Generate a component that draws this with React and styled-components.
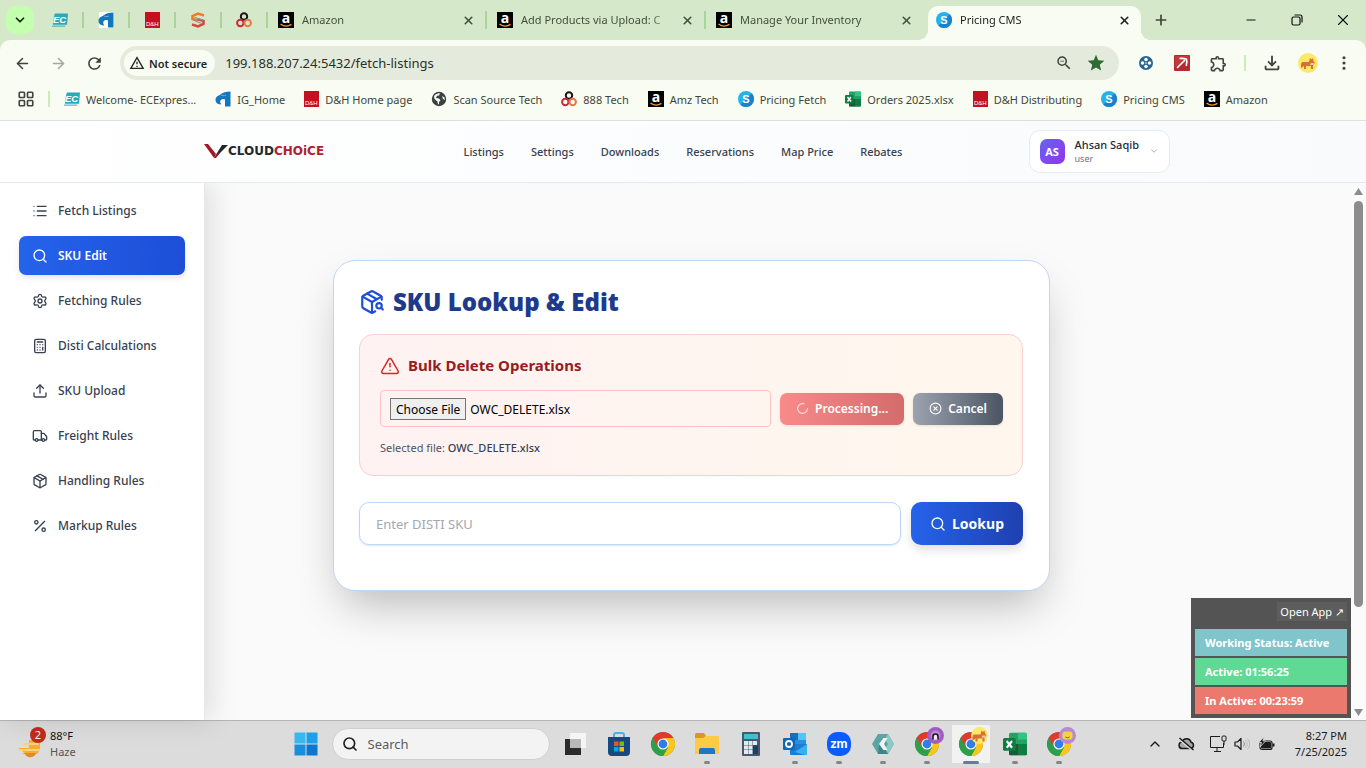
import React, { useEffect, useRef } from "react";
import styled, { createGlobalStyle, css } from "styled-components";
import {
  ArrowLeft,
  ArrowRight,
  Calculator,
  ChevronDown,
  ChevronUp,
  CircleX,
  EllipsisVertical,
  LayoutGrid,
  List,
  LoaderCircle,
  Minus,
  Package,
  PackageSearch,
  Percent,
  Plus,
  Search,
  Settings,
  TriangleAlert,
  Truck,
  Upload,
  X,
} from "lucide-react";
import {
  MdOutlineExtension,
  MdOutlineFileDownload,
  MdRefresh,
  MdStar,
  MdZoomOut,
  MdOutlineWarningAmber,
} from "react-icons/md";

const GlobalStyle = createGlobalStyle`
  * {
    box-sizing: border-box;
  }
  body {
    margin: 0;
    font-family: "Noto Sans", "Open Sans", sans-serif;
    font-size: 12px;
    color: #374151;
  }
  button,
  input {
    font-family: inherit;
  }
  button {
    padding: 0;
    border: none;
    background: none;
    color: inherit;
    cursor: pointer;
  }
  a {
    color: inherit;
    text-decoration: none;
  }
  svg {
    display: block;
    flex-shrink: 0;
    overflow: visible;
  }
`;

const Screen = styled.div`
  display: flex;
  flex-direction: column;
  height: 100vh;
  overflow: hidden;
`;

/* browser */

const TabStrip = styled.div`
  display: flex;
  align-items: center;
  height: 40px;
  padding-left: 6px;
  background-color: #d6e8ca;
`;

const TabSearch = styled.button`
  display: flex;
  align-items: center;
  justify-content: center;
  flex-shrink: 0;
  width: 28px;
  height: 28px;
  margin-right: 4px;
  border-radius: 10px;
  background-color: #c4ffb0;
  color: #16240f;
`;

const separator = css`
  border-right: 2px solid #a9d596;
`;

const PinnedTab = styled.button`
  display: flex;
  align-items: center;
  justify-content: center;
  flex-shrink: 0;
  width: 46px;
  height: 16px;
  ${separator}
`;

const Tab = styled.div`
  display: flex;
  align-items: center;
  flex: 0 0 219px;
  min-width: 0;
  height: 18px;
  padding: 0 10px;
  gap: 8px;
  font-size: 11px;
  color: #43503c;
  ${separator}
  ${(props) => !props.$line && "border-color: transparent;"}
  .name {
    flex: 1;
    overflow: hidden;
    white-space: nowrap;
    line-height: 18px;
    mask-image: linear-gradient(to right, #000 85%, transparent);
  }
`;

const ActiveTab = styled(Tab)`
  position: relative;
  align-self: flex-end;
  flex-basis: 213px;
  height: 34px;
  margin: 0 9px 0 3px;
  padding: 0 10px 6px 8px;
  border: none;
  border-radius: 10px 10px 0 0;
  background-color: #f9fcf2;
  color: #1b1f18;
  &::before,
  &::after {
    content: "";
    position: absolute;
    bottom: 0;
    width: 10px;
    height: 10px;
  }
  &::before {
    left: -10px;
    background: radial-gradient(circle at 0 0, transparent 10px, #f9fcf2 10px);
  }
  &::after {
    right: -10px;
    background: radial-gradient(circle at 100% 0, transparent 10px, #f9fcf2 10px);
  }
`;

const NewTab = styled.button`
  display: flex;
  flex-shrink: 0;
  padding: 3px;
  color: #3c4737;
`;

const WindowButtons = styled.div`
  display: flex;
  flex-shrink: 0;
  margin-left: auto;
  button {
    display: flex;
    align-items: center;
    justify-content: center;
    width: 46px;
    height: 40px;
    color: #111;
  }
`;

const Toolbar = styled.div`
  display: flex;
  align-items: center;
  height: 46px;
  padding: 0 4px;
  background-color: #f9fcf2;
  border-radius: 10px 10px 0 0;
`;

const ToolbarWrap = styled.div`
  background-color: #d6e8ca;
`;

const ToolButton = styled.button`
  display: flex;
  align-items: center;
  justify-content: center;
  flex-shrink: 0;
  width: 36px;
  height: 34px;
  color: ${(props) => (props.$dim ? "#a4a9a0" : "#3d443a")};
`;

const ToolLine = styled.span`
  width: 10px;
  height: 16px;
  margin-right: 8px;
  ${separator}
  border-color: #c7eeb6;
`;

const AddressBar = styled.form`
  display: flex;
  align-items: center;
  flex: 1;
  height: 34px;
  margin: 0 9px 0 8px;
  padding: 0 7px 0 4px;
  border-radius: 17px;
  background-color: #e4ebdc;
  input {
    flex: 1;
    min-width: 0;
    padding: 0 10px;
    border: none;
    outline: none;
    background: none;
    font-size: 13px;
    color: #2b3028;
  }
`;

const NotSecure = styled.button`
  display: flex;
  align-items: center;
  gap: 4px;
  height: 26px;
  padding: 0 8px 0 5px;
  border-radius: 13px;
  background-color: #f9fcf2;
  font-size: 11px;
  font-weight: 600;
  color: #22271f;
`;

const BarIcon = styled.button`
  display: flex;
  width: 32px;
  justify-content: center;
  color: ${(props) => props.$color || "#3d443a"};
`;

const Bookmarks = styled.nav`
  display: flex;
  align-items: center;
  height: 35px;
  padding: 0 17px 8px;
  gap: 19px;
  overflow: hidden;
  border-bottom: 1px solid #dfe0dc;
  background-color: #f9fcf2;
  font-size: 11px;
  color: #3f473b;
  a {
    display: flex;
    align-items: center;
    gap: 6px;
    white-space: nowrap;
  }
`;

const BookmarkLine = styled.span`
  width: 2px;
  height: 16px;
  margin: 0 -5px 0 -6px;
  background-color: #c7eeb6;
`;

/* page */

const Header = styled.header`
  position: relative;
  z-index: 1;
  display: flex;
  justify-content: center;
  height: 62px;
  padding-bottom: 1px;
  border-bottom: 1px solid #e6e9ed;
  background-image: linear-gradient(to right, #ffffff, #f8fafc);
`;

const HeaderInner = styled.div`
  display: grid;
  grid-template-columns: 1fr auto 1fr;
  align-items: center;
  width: 100%;
  max-width: 974px;
`;

const Logo = styled.a`
  display: flex;
  align-items: center;
  padding-left: 8px;
  font-family: "DejaVu Sans", sans-serif;
  font-size: 12px;
  font-weight: 700;
  line-height: 16px;
  color: #24292f;
  span {
    color: #b3202e;
  }
`;

const TopNav = styled.nav`
  display: flex;
  gap: 27px;
  font-size: 11px;
  font-weight: 500;
  color: #374151;
`;

const UserButton = styled.button`
  display: flex;
  align-items: center;
  justify-self: end;
  height: 43px;
  padding: 0 10px;
  gap: 10px;
  border: 1px solid #e8ebf0;
  border-radius: 11px;
  background-color: #fff;
  text-align: left;
  .avatar {
    width: 25px;
    height: 25px;
    border-radius: 7px;
    background-image: linear-gradient(135deg, #6366f1, #9333ea);
    font-size: 11px;
    font-weight: 700;
    line-height: 25px;
    text-align: center;
    color: #fff;
  }
  .name {
    font-size: 11px;
    font-weight: 500;
    line-height: 15px;
    color: #1f2937;
  }
  .role {
    font-size: 9px;
    line-height: 13px;
    color: #6b7280;
  }
`;

const Body = styled.div`
  position: relative;
  display: flex;
  flex: 1;
  min-height: 0;
  background-color: #fafafa;
`;

const Sidebar = styled.nav`
  display: flex;
  flex-direction: column;
  flex-shrink: 0;
  gap: 6px;
  width: 205px;
  padding: 8px 19px 0;
  border-right: 1px solid #e5e7eb;
  background-color: #fff;
  box-shadow: 6px 0 28px rgba(0, 0, 0, 0.12);
`;

const SideLink = styled.a`
  display: flex;
  align-items: center;
  flex-shrink: 0;
  height: 39px;
  padding: 0 13px;
  gap: 10px;
  border-radius: 7px;
  font-size: 12px;
  font-weight: 500;
  color: #374151;
  ${(props) =>
    props.$active &&
    css`
      background-image: linear-gradient(to right, #2563eb, #1d4ed8);
      box-shadow: 0 3px 6px rgba(0, 0, 0, 0.1);
      font-weight: 600;
      color: #fff;
    `}
`;

const Main = styled.main`
  flex: 1;
  padding: 77px 128px 0;
`;

const Card = styled.section`
  max-width: 717px;
  padding: 25px 26px 45px 25px;
  border: 1px solid #bfd7f7;
  border-radius: 22px;
  background-color: #fff;
  box-shadow: 0 22px 45px -10px rgba(0, 0, 0, 0.27);
`;

const CardTitle = styled.h1`
  display: flex;
  align-items: center;
  gap: 8px;
  margin: 0 0 17px;
  font-size: 24px;
  font-weight: 900;
  line-height: 31px;
  color: #1e3a8a;
  svg {
    color: #1d4ed8;
  }
`;

const DeleteBox = styled.div`
  margin-bottom: 26px;
  padding: 20px 19px 18px 20px;
  border: 1px solid #f9cfcf;
  border-radius: 14px;
  background-image: linear-gradient(to right, #fef2f2, #fff7ed);
`;

const BoxTitle = styled.h2`
  display: flex;
  align-items: center;
  gap: 8px;
  margin: 0 0 14px;
  font-size: 15px;
  font-weight: 700;
  line-height: 21px;
  color: #991b1b;
  svg {
    color: #dc2626;
  }
`;

const FileRow = styled.div`
  display: flex;
  align-items: center;
  gap: 9px;
`;

const FileInput = styled.input`
  flex: 1;
  min-width: 0;
  height: 37px;
  padding: 7px 9px;
  border: 1px solid #fbc4c4;
  border-radius: 4px;
  font-size: 12px;
  color: #000;
  &::file-selector-button {
    height: 22px;
    padding: 0 5px;
    border: 1px solid #767676;
    background-color: #efefef;
    font-family: inherit;
    font-size: 12px;
    color: #000;
  }
`;

const SmallButton = styled.button`
  display: flex;
  align-items: center;
  gap: 6px;
  height: 32px;
  padding: 0 16px;
  border-radius: 7px;
  background-image: linear-gradient(
    to right,
    ${(props) => (props.$gray ? "#9ca3af, #4b5563" : "#f98a8a, #d36c6c")}
  );
  box-shadow: 0 1px 3px rgba(0, 0, 0, 0.1);
  font-size: 12px;
  font-weight: 600;
  color: #fff;
`;

const Selected = styled.p`
  margin: 12px 0 0;
  font-size: 11px;
  line-height: 18px;
  color: #4b5563;
  b {
    font-weight: 500;
    color: #374151;
  }
`;

const LookupRow = styled.form`
  display: flex;
  gap: 10px;
`;

const SkuInput = styled.input`
  flex: 1;
  min-width: 0;
  height: 43px;
  padding: 0 16px;
  border: 1px solid #bfd7f7;
  border-radius: 10px;
  outline: none;
  box-shadow: 0 1px 2px rgba(59, 130, 246, 0.2);
  font-size: 13px;
  color: #374151;
  &::placeholder {
    color: #a3a8b0;
  }
`;

const LookupButton = styled.button`
  display: flex;
  align-items: center;
  justify-content: center;
  gap: 6px;
  height: 43px;
  padding: 0 19px;
  border-radius: 10px;
  background-image: linear-gradient(to right, #2563eb, #1e40af);
  box-shadow: 0 5px 10px rgba(0, 0, 0, 0.12);
  font-size: 14px;
  font-weight: 700;
  color: #fff;
`;

const Scrollbar = styled.div`
  display: flex;
  flex-direction: column;
  align-items: center;
  justify-content: space-between;
  width: 15px;
  padding: 5px 0 4px;
  background-color: #fbfbfb;
  .thumb {
    flex: 0 1 406px;
    width: 9px;
    margin: 6px 0 auto;
    border-radius: 5px;
    background-color: #8c8c8c;
  }
`;

const Tracker = styled.aside`
  position: absolute;
  right: 15px;
  bottom: 2px;
  display: flex;
  flex-direction: column;
  gap: 2px;
  width: 160px;
  padding: 4px;
  background-color: #545454;
  color: #fff;
  button {
    align-self: flex-end;
    height: 19px;
    margin-bottom: 6px;
    padding: 0 3px;
    background-color: #5d5d5d;
    font-size: 11px;
    color: #fff;
  }
`;

const TrackerRow = styled.div`
  height: 27px;
  padding-left: 10px;
  background-color: ${(props) => props.$color};
  font-size: 11px;
  font-weight: 700;
  line-height: 27px;
`;

/* taskbar */

const Taskbar = styled.footer`
  display: grid;
  grid-template-columns: 1fr auto 1fr;
  align-items: center;
  height: 48px;
  padding-bottom: 2px;
  border-top: 1px solid #b4b4b4;
  background-color: #dcdcdc;
  color: #222;
`;

const Weather = styled.button`
  display: flex;
  align-items: center;
  gap: 6px;
  padding-left: 18px;
  font-size: 11px;
  line-height: 16px;
  text-align: left;
  color: #111;
  .sky {
    color: #555;
  }
`;

const Apps = styled.div`
  display: flex;
  align-items: center;
  padding-right: 2px;
`;

const AppButton = styled.button`
  position: relative;
  display: flex;
  align-items: center;
  justify-content: center;
  width: 44px;
  height: 40px;
  ${(props) =>
    props.$running &&
    css`
      &::after {
        content: "";
        position: absolute;
        bottom: 0;
        width: 6px;
        height: 3px;
        border-radius: 2px;
        background-color: #858585;
      }
    `}
  ${(props) =>
    props.$active &&
    css`
      background: linear-gradient(#f2f2f2, #f2f2f2) center / 38px 38px no-repeat;
      &::after {
        width: 16px;
        background-color: #6b7a99;
      }
    `}
`;

const TaskSearch = styled.label`
  display: flex;
  align-items: center;
  gap: 10px;
  width: 218px;
  height: 32px;
  margin: 0 3px 0 4px;
  padding: 0 9px;
  border: 1px solid #cfcfcf;
  border-radius: 16px;
  background-color: #f3f3f3;
  input {
    width: 100%;
    padding: 0;
    border: none;
    outline: none;
    background: none;
    font-size: 13px;
    &::placeholder {
      color: #5c5c5c;
    }
  }
`;

const Tray = styled.div`
  display: flex;
  align-items: center;
  justify-content: flex-end;
  gap: 7px;
  padding-right: 19px;
  color: #1b1b1b;
  svg:first-child {
    margin-right: 8px;
  }
  svg:nth-child(2) {
    margin-right: 8px;
  }
`;

const Clock = styled.time`
  margin-left: 13px;
  font-size: 11px;
  line-height: 16px;
  text-align: right;
`;

/* drawings */

function EcIcon() {
  return (
    <svg width="16" height="16" viewBox="0 0 17 16">
      <path d="M3 1h14l-1 12H1l1-8z" fill="#2ba9b8" />
      <path d="M0 14.500h14" stroke="#2ba9b8" />
      <text x="1" y="11.500" fontSize="10" fontWeight="900" fontStyle="italic" fill="#fff" fontFamily="Liberation Sans, sans-serif">
        EC
      </text>
    </svg>
  );
}

function IgIcon() {
  return (
    <svg width="16" height="16" viewBox="0 0 16 16">
      <rect x="1" width="15" height="16" fill="#fff" />
      <path d="M15.500.5v15H10V8.500C7.500 7.500 5.500 8.500 5.200 10.500c0 1.200.4 2 1.300 2.800C3 13.800.5 12 .5 9 .5 5 4 4.800 5.500 3.500 7.500 1.500 11 .5 15.500.5z" fill="#1277bd" />
      <path d="M5 3C6.500 5 9 5 11 4" fill="none" stroke="#6fb2de" strokeWidth="1" />
    </svg>
  );
}

function DhIcon() {
  return (
    <svg width="15" height="16" viewBox="0 0 15 16">
      <rect width="15" height="16" fill="#c4101f" />
      <text x="1" y="14" fontSize="6" fill="#fff" fontFamily="Liberation Sans, sans-serif">
        D&amp;H
      </text>
    </svg>
  );
}

function SwirlIcon() {
  return (
    <svg width="16" height="16" viewBox="0 0 16 16" fill="none" strokeWidth="2.500">
      <path d="M14 3.500 8 1.500 2.500 4v3L8 8.500" stroke="#f07a2b" />
      <path d="M2 12.500 8 14.500l5.500-2.500V9L8 7.200" stroke="#d8453a" />
      <path d="M4.500 5.200 13 8.500M3 8l8 3.200" stroke="#8d9297" strokeWidth="1.200" />
    </svg>
  );
}

function RingsIcon() {
  return (
    <svg width="16" height="16" viewBox="0 0 16 16" fill="none" strokeWidth="2">
      <circle cx="8" cy="4.500" r="3.200" stroke="#1f1416" />
      <circle cx="4.300" cy="11" r="3.200" stroke="#c8283a" />
      <circle cx="11.700" cy="11" r="3.200" stroke="#e8784a" />
    </svg>
  );
}

function AmazonIcon() {
  return (
    <svg width="16" height="16" viewBox="0 0 16 16">
      <rect width="16" height="16" fill="#000" />
      <text x="8" y="11" fontSize="14" fontWeight="700" textAnchor="middle" fill="#fff" fontFamily="Open Sans, sans-serif">
        a
      </text>
      <path d="M2.500 12c3.500 2.600 7.500 2.600 11 .4" fill="none" stroke="#f19a2b" strokeWidth="1.300" />
    </svg>
  );
}

function PricingIcon() {
  return (
    <svg width="16" height="16" viewBox="0 0 16 16">
      <circle cx="8" cy="8" r="8" fill="#23b3ea" />
      <path d="M13.700 2.300a8 8 0 0 1-11.400 11.400z" fill="#1583cf" />
      <text x="8" y="12" fontSize="11" fontWeight="700" textAnchor="middle" fill="#fff" fontFamily="Liberation Sans, sans-serif">
        S
      </text>
    </svg>
  );
}

function ExcelIcon({ size = 16 }) {
  return (
    <svg width={size} height={size} viewBox="0 0 16 16">
      <rect x="4" y="0.500" width="12" height="15" rx="1" fill="#21a366" />
      <path d="M4 8h6v7.500H5a1 1 0 0 1-1-1z" fill="#185c37" />
      <path d="M10 8h6v6.500a1 1 0 0 1-1 1h-5z" fill="#107c41" />
      <path d="M10 .5h5a1 1 0 0 1 1 1V5h-6z" fill="#33c481" />
      <rect y="4" width="8.500" height="8.500" rx="1" fill="#107c41" />
      <path d="m2.500 6 3.500 4.500M6 6l-3.500 4.500" stroke="#fff" strokeWidth="1.400" />
    </svg>
  );
}

function GlobeIcon() {
  return (
    <svg width="16" height="16" viewBox="0 0 16 16">
      <circle cx="8" cy="8" r="7.200" fill="#3b4043" />
      <path d="M3 5c2-2 4-3 6-2.500L8 4.500l-2 .3L5 7l3 .4 1.500 1.800L8 11v2.500c-1 0-1.500-1.500-1.500-3L3.500 8zM11 5l2.500 1.500L13.800 9 12 8z" fill="#f9fcf2" />
    </svg>
  );
}

function ExtensionDot() {
  return (
    <svg width="14" height="14" viewBox="0 0 16 16">
      <circle cx="8" cy="8" r="8" fill="#2b648f" />
      <circle cx="8" cy="4" r="2" fill="#fff" />
      <circle cx="8" cy="12" r="2" fill="#fff" />
      <circle cx="4" cy="8" r="2" fill="#fff" />
      <circle cx="12" cy="8" r="2" fill="#fff" />
      <path d="m8 6.500 1.500 1.500L8 9.500 6.500 8z" fill="#9fc0d8" />
    </svg>
  );
}

function ExtensionPick() {
  return (
    <svg width="16" height="16" viewBox="0 0 16 16">
      <rect width="16" height="16" rx="1" fill="#b32b30" />
      <path d="M1 1h14v6L1 12z" fill="#cf4a4c" opacity=".5" />
      <path d="M3 13 11 5M5.500 3.500c3-.3 5.200 0 7 .8.6 2 .6 4-.2 6.700" fill="none" stroke="#fff" strokeWidth="1.600" />
    </svg>
  );
}

function DogFace({ r = 10 }) {
  return (
    <g>
      <circle r={r} fill="#fbe96a" />
      <path d="M-7 1l1-2h7l1-4 1.500 1.500L5-5l.5 3L7 0 5 2v4H3V3h-5v3h-2V3l-3 2z" fill="#d96f32" />
      <path d="M3 0l3 0-1 2H2z" fill="#f7d3b5" />
    </g>
  );
}

function ChromeLogo({ badge }) {
  return (
    <svg width="32" height="32" viewBox="0 0 32 32">
      <g transform="translate(16 16)">
        <circle r="12" fill="#34a853" />
        <path d="M-10.400-6A12 12 0 0 1 10.400-6L0-6-5.200 3z" fill="#e0392d" />
        <path d="M10.400-6A12 12 0 0 1 0 12L5.200 3 0-6z" fill="#fbc519" />
        <path d="M-10.400-6A12 12 0 0 0 0 12L5.200 3-5.200 3z" fill="#2e9e4b" />
        <circle r="5.600" fill="#fff" />
        <circle r="4.400" fill="#2f7de9" />
      </g>
      {badge === "headset" && (
        <g transform="translate(24.500 7.500)">
          <circle r="8.500" fill="#a05cc0" />
          <circle r="5" fill="#b98ad0" />
          <path d="M-2.500 4v-3a2.500 2.500 0 0 1 5 0v3" fill="#f6e9fb" stroke="#1d1424" strokeWidth="1.600" />
        </g>
      )}
      {badge === "dog" && (
        <g transform="translate(24.500 7.500)">
          <DogFace r={8.5} />
        </g>
      )}
      {badge === "cloud" && (
        <g transform="translate(24.500 7.500)">
          <circle r="8.500" fill="#b48ad6" />
          <path d="M-5 0a3 3 0 0 1 3-4h4a3 3 0 0 1 3 4 3 3 0 0 1-3 4h-4a3 3 0 0 1-3-4" fill="#f6d33c" />
          <path d="M-2 1.500Q0 3 2 1.500" fill="none" stroke="#8d5c10" />
        </g>
      )}
    </svg>
  );
}

function WindowsLogo() {
  return (
    <svg width="24" height="24" viewBox="0 0 24 24">
      <path d="M.5.500h11v11H.5z" fill="#38b8f0" />
      <path d="M12.500.500h11v11h-11z" fill="#1f9fe8" />
      <path d="M.5 12.500h11v11H.5z" fill="#178fdf" />
      <path d="M12.500 12.500h11v11h-11z" fill="#0b77d0" />
    </svg>
  );
}

function TaskViewIcon() {
  return (
    <svg width="24" height="24" viewBox="0 0 24 24">
      <rect x="7" y="1" width="16" height="15" fill="#f5f5f5" />
      <rect x="2" y="7" width="16" height="16" fill="#2b2b2b" />
      <rect x="7" y="7" width="11" height="9" fill="#b9b9b9" />
    </svg>
  );
}

function StoreIcon() {
  return (
    <svg width="24" height="24" viewBox="0 0 24 24">
      <path d="M7 5V3a2 2 0 0 1 2-2h6a2 2 0 0 1 2 2v2" fill="none" stroke="#43b5e6" strokeWidth="2" />
      <path d="M1 5h22v15a4 4 0 0 1-4 4H5a4 4 0 0 1-4-4z" fill="#17487f" />
      <path d="M7 9.500h4.500V14H7z" fill="#f05325" />
      <path d="M12.500 9.500H17V14h-4.500z" fill="#80bb0a" />
      <path d="M7 15h4.500v4.500H7z" fill="#05a5f0" />
      <path d="M12.500 15H17v4.500h-4.500z" fill="#fdb813" />
    </svg>
  );
}

function FolderIcon() {
  return (
    <svg width="26" height="24" viewBox="0 0 26 24">
      <path d="M1 2.500A1.500 1.500 0 0 1 2.500 1H10l2 3-3 3H1z" fill="#d89a1c" />
      <path d="M1 6h8l3-2h12a1 1 0 0 1 1 1v17H1z" fill="#fbcb45" />
      <path d="M5 22v-4a2 2 0 0 1 2-2h12a2 2 0 0 1 2 2v4z" fill="#1f77c4" />
    </svg>
  );
}

function CalcIcon() {
  const keys = [
    [4, 9],
    [8.5, 9],
    [13, 9],
    [4, 13.5],
    [8.5, 13.5],
    [4, 18],
    [8.5, 18],
  ];
  return (
    <svg width="20" height="24" viewBox="0 0 20 24">
      <rect x="1" width="18" height="24" rx="1" fill="#48596b" />
      <rect x="3" y="2" width="14" height="5" fill="#3fc0cf" />
      {keys.map(([x, y]) => (
        <rect key={`${x}-${y}`} x={x - 1} y={y} width="4" height="4" fill="#e4ebf0" />
      ))}
      <rect x="12" y="13.500" width="5" height="8.500" fill="#1d3f66" />
    </svg>
  );
}

function OutlookIcon() {
  return (
    <svg width="26" height="24" viewBox="0 0 26 24">
      <path d="M8 1h16v13H8z" fill="#2a8fdc" />
      <path d="M16 1h8v7h-8z" fill="#50c4f5" />
      <path d="M8 1h8v7H8z" fill="#1470c2" />
      <path d="M8 12h17v11H9a1 1 0 0 1-1-1z" fill="#1a7fd4" />
      <path d="m25 12-12 8 10 3h2z" fill="#38b1ef" />
      <rect x="1" y="6" width="12" height="12" rx="1" fill="#1267b8" />
      <circle cx="7" cy="12" r="3" fill="none" stroke="#fff" strokeWidth="1.800" />
    </svg>
  );
}

function ZoomIcon() {
  return (
    <svg width="24" height="24" viewBox="0 0 24 24">
      <rect width="24" height="24" rx="10" fill="#0b5cff" />
      <text x="12" y="16" fontSize="13" fontWeight="900" textAnchor="middle" fill="#fff" fontFamily="Lato, sans-serif">
        zm
      </text>
    </svg>
  );
}

function HexIcon() {
  return (
    <svg width="24" height="24" viewBox="0 0 24 24">
      <path d="M7 2h10l6 10-6 10H7L1 12z" fill="#5ea3a3" />
      <path d="M17 2l6 10-6 10-3-5 3-5-3-5z" fill="#8ac9c4" />
      <path d="M7 22h10l-3-5-6-5z" fill="#3f8587" />
      <path d="M8 12l4.500-6h4L13 12l3.500 6h-4z" fill="#eef7f6" />
    </svg>
  );
}

function HazeIcon() {
  return (
    <svg width="26" height="32" viewBox="0 0 26 32">
      <path d="M11 12h11v8a8 8 0 0 1-3 6H8l-4-3-4-3h11z" fill="#f5ad35" />
      <path d="M6 16h14M2 22h19" stroke="#f9d27c" strokeWidth="2" strokeLinecap="round" />
      <path d="M4 25h14a6 6 0 0 1-11 1z" fill="#e48a1c" />
      <circle cx="20" cy="7" r="8" fill="#c42b1c" />
      <text x="20" y="11" fontSize="11" textAnchor="middle" fill="#fff" fontFamily="Noto Sans, sans-serif">
        2
      </text>
    </svg>
  );
}

function CloudOffIcon() {
  return (
    <svg width="17" height="15" viewBox="0 0 17 15" fill="none" stroke="#1b1b1b" strokeWidth="1.500">
      <path d="M4.500 12.500a3.300 3.300 0 0 1-.3-6.600 4.600 4.600 0 0 1 8.800.3 3.200 3.200 0 0 1-.4 6.300z" fill="#a8a8a8" />
      <path d="M1.500 3.500 14 14" stroke="#dcdcdc" strokeWidth="2" />
      <path d="M1.500 2 15.500 14" />
    </svg>
  );
}

function MonitorIcon() {
  return (
    <svg width="17" height="17" viewBox="0 0 17 17" fill="none" stroke="#1b1b1b">
      <path d="M10 1.500H.5v11h13V8M4 16.500h7M7 12.500v4" />
      <rect x="12" y="1" width="4" height="5" rx="1" />
      <path d="M14 6v4" />
    </svg>
  );
}

function SpeakerIcon() {
  return (
    <svg width="17" height="14" viewBox="0 0 17 14" fill="none" stroke="#1b1b1b">
      <path d="M1 5h2.500L7 1.500v11L3.500 9H1z" strokeWidth="1.200" strokeLinejoin="round" />
      <path d="M9.500 4.500a4 4 0 0 1 0 5" stroke="#8b8b8b" />
      <path d="M11.500 3a6 6 0 0 1 0 8M13.500 1.500a8 8 0 0 1 0 11" stroke="#bcbcbc" />
    </svg>
  );
}

function BatteryIcon() {
  return (
    <svg width="17" height="14" viewBox="0 0 17 14">
      <rect x="2" y="4" width="12" height="8.500" rx="2" fill="#dcdcdc" stroke="#1b1b1b" strokeWidth="1.200" />
      <rect x="3" y="5" width="10" height="6.500" rx="1" fill="#1b1b1b" />
      <path d="M14.500 6.500h2v3h-2z" fill="#1b1b1b" />
      <path d="M5.500 0 1 5.500h2.500L2 10l5.500-6H5z" fill="#1b1b1b" stroke="#dcdcdc" strokeWidth=".8" />
    </svg>
  );
}

function RestoreIcon() {
  return (
    <svg width="12" height="12" viewBox="0 0 12 12" fill="none" stroke="#111" strokeWidth="1.200">
      <rect x="1" y="3" width="8" height="8" rx="1.500" />
      <path d="M3.500 1H9a2 2 0 0 1 2 2v5.500" />
    </svg>
  );
}

function VMark() {
  return (
    <svg width="24" height="14" viewBox="0 0 24 14">
      <path d="M0 0h4l8 10-2 4z" fill="#a51724" />
      <path d="M10 14 18 1h6L12 13z" fill="#22262b" />
      <path d="M10 14h2l4-5-3 1z" fill="#a51724" />
    </svg>
  );
}

const bookmarks = [
  { icon: <EcIcon />, name: "Welcome- ECExpres..." },
  { icon: <IgIcon />, name: "IG_Home" },
  { icon: <DhIcon />, name: "D&H Home page" },
  { icon: <GlobeIcon />, name: "Scan Source Tech" },
  { icon: <RingsIcon />, name: "888 Tech" },
  { icon: <AmazonIcon />, name: "Amz Tech" },
  { icon: <PricingIcon />, name: "Pricing Fetch" },
  { icon: <ExcelIcon />, name: "Orders 2025.xlsx" },
  { icon: <DhIcon />, name: "D&H Distributing" },
  { icon: <PricingIcon />, name: "Pricing CMS" },
  { icon: <AmazonIcon />, name: "Amazon" },
];

const sideLinks = [
  { Icon: List, name: "Fetch Listings" },
  { Icon: Search, name: "SKU Edit", active: true },
  { Icon: Settings, name: "Fetching Rules" },
  { Icon: Calculator, name: "Disti Calculations" },
  { Icon: Upload, name: "SKU Upload" },
  { Icon: Truck, name: "Freight Rules" },
  { Icon: Package, name: "Handling Rules" },
  { Icon: Percent, name: "Markup Rules" },
];

const topLinks = ["Listings", "Settings", "Downloads", "Reservations", "Map Price", "Rebates"];

const apps = [
  { name: "Task view", icon: <TaskViewIcon /> },
  { name: "Store", icon: <StoreIcon /> },
  { name: "Chrome", icon: <ChromeLogo /> },
  { name: "Explorer", icon: <FolderIcon />, running: true },
  { name: "Calculator", icon: <CalcIcon /> },
  { name: "Outlook", icon: <OutlookIcon />, running: true },
  { name: "Zoom", icon: <ZoomIcon />, running: true },
  { name: "Tracker", icon: <HexIcon />, running: true },
  { name: "Chrome 2", icon: <ChromeLogo badge="headset" />, running: true },
  { name: "Chrome 3", icon: <ChromeLogo badge="dog" />, running: true, active: true },
  { name: "Excel", icon: <ExcelIcon size={24} />, running: true },
  { name: "Chrome 4", icon: <ChromeLogo badge="cloud" />, running: true },
];

function Browser() {
  return (
    <>
      <TabStrip>
        <TabSearch aria-label="Search tabs">
          <ChevronDown size={14} strokeWidth={3} />
        </TabSearch>
        <PinnedTab aria-label="ECExpress">
          <EcIcon />
        </PinnedTab>
        <PinnedTab aria-label="IG">
          <IgIcon />
        </PinnedTab>
        <PinnedTab aria-label="D&H">
          <DhIcon />
        </PinnedTab>
        <PinnedTab aria-label="Scan Source">
          <SwirlIcon />
        </PinnedTab>
        <PinnedTab aria-label="888">
          <RingsIcon />
        </PinnedTab>
        {["Amazon", "Add Products via Upload: C", "Manage Your Inventory"].map((name, i) => (
          <Tab key={name} $line={i < 2}>
            <AmazonIcon />
            <span className="name">{name}</span>
            <button aria-label="Close tab">
              <X size={13} strokeWidth={3} />
            </button>
          </Tab>
        ))}
        <ActiveTab>
          <PricingIcon />
          <span className="name">Pricing CMS</span>
          <button aria-label="Close tab">
            <X size={13} strokeWidth={3} />
          </button>
        </ActiveTab>
        <NewTab aria-label="New tab">
          <Plus size={16} strokeWidth={2.5} />
        </NewTab>
        <WindowButtons>
          <button aria-label="Minimize">
            <Minus size={14} strokeWidth={2} />
          </button>
          <button aria-label="Restore">
            <RestoreIcon />
          </button>
          <button aria-label="Close">
            <X size={18} strokeWidth={1.5} />
          </button>
        </WindowButtons>
      </TabStrip>
      <ToolbarWrap>
        <Toolbar>
          <ToolButton aria-label="Back">
            <ArrowLeft size={17} strokeWidth={2.2} />
          </ToolButton>
          <ToolButton aria-label="Forward" $dim>
            <ArrowRight size={17} strokeWidth={2.2} />
          </ToolButton>
          <ToolButton aria-label="Reload">
            <MdRefresh size={19} />
          </ToolButton>
          <AddressBar>
            <NotSecure type="button">
              <MdOutlineWarningAmber size={16} />
              Not secure
            </NotSecure>
            <input aria-label="Address" defaultValue="199.188.207.24:5432/fetch-listings" />
            <BarIcon type="button" aria-label="Zoom">
              <MdZoomOut size={18} />
            </BarIcon>
            <BarIcon type="button" aria-label="Bookmark" $color="#2f6b33">
              <MdStar size={20} />
            </BarIcon>
          </AddressBar>
          <ToolButton aria-label="Extension">
            <ExtensionDot />
          </ToolButton>
          <ToolButton aria-label="Extension">
            <ExtensionPick />
          </ToolButton>
          <ToolButton aria-label="Extensions">
            <MdOutlineExtension size={19} />
          </ToolButton>
          <ToolLine />
          <ToolButton aria-label="Downloads">
            <MdOutlineFileDownload size={22} />
          </ToolButton>
          <ToolButton aria-label="Profile">
            <svg width="20" height="20" viewBox="-10 -10 20 20">
              <DogFace />
            </svg>
          </ToolButton>
          <ToolButton aria-label="Menu">
            <EllipsisVertical size={18} strokeWidth={2.2} />
          </ToolButton>
        </Toolbar>
      </ToolbarWrap>
      <Bookmarks>
        <LayoutGrid size={18} strokeWidth={2.2} />
        <BookmarkLine />
        {bookmarks.map((item) => (
          <a key={item.name} href="#bookmark">
            {item.icon}
            {item.name}
          </a>
        ))}
      </Bookmarks>
    </>
  );
}

function BulkDelete() {
  const fileRef = useRef(null);
  const fileName = "OWC_DELETE.xlsx";

  useEffect(() => {
    const data = new DataTransfer();
    data.items.add(new File([""], fileName));
    fileRef.current.files = data.files;
  }, []);

  return (
    <DeleteBox>
      <BoxTitle>
        <TriangleAlert size={20} strokeWidth={1.8} />
        Bulk Delete Operations
      </BoxTitle>
      <FileRow>
        <FileInput ref={fileRef} type="file" aria-label="File to delete" />
        <SmallButton>
          <LoaderCircle size={13} opacity={0.7} />
          Processing...
        </SmallButton>
        <SmallButton $gray>
          <CircleX size={13} />
          Cancel
        </SmallButton>
      </FileRow>
      <Selected>
        Selected file: <b>{fileName}</b>
      </Selected>
    </DeleteBox>
  );
}

function App() {
  return (
    <Screen>
      <GlobalStyle />
      <Browser />
      <Header>
        <HeaderInner>
          <Logo href="#home">
            <VMark />
            CLOUD<span>CHOiCE</span>
          </Logo>
          <TopNav>
            {topLinks.map((name) => (
              <a key={name} href="#page">
                {name}
              </a>
            ))}
          </TopNav>
          <UserButton>
            <div className="avatar">AS</div>
            <div>
              <div className="name">Ahsan Saqib</div>
              <div className="role">user</div>
            </div>
            <ChevronDown size={10} color="#9ca3af" />
          </UserButton>
        </HeaderInner>
      </Header>
      <Body>
        <Sidebar>
          {sideLinks.map(({ Icon, name, active }) => (
            <SideLink key={name} href="#section" $active={active}>
              <Icon size={16} strokeWidth={2} />
              {name}
            </SideLink>
          ))}
        </Sidebar>
        <Main>
          <Card>
            <CardTitle>
              <PackageSearch size={26} />
              SKU Lookup &amp; Edit
            </CardTitle>
            <BulkDelete />
            <LookupRow>
              <SkuInput aria-label="DISTI SKU" placeholder="Enter DISTI SKU" />
              <LookupButton type="button">
                <Search size={16} />
                Lookup
              </LookupButton>
            </LookupRow>
          </Card>
        </Main>
        <Scrollbar>
          <svg width="9" height="7" viewBox="0 0 9 7">
            <path d="M4.500 0 9 7H0z" fill="#8c8c8c" />
          </svg>
          <div className="thumb" />
          <svg width="9" height="7" viewBox="0 0 9 7">
            <path d="M0 0h9L4.500 7z" fill="#8c8c8c" />
          </svg>
        </Scrollbar>
        <Tracker>
          <button>Open App ↗</button>
          <TrackerRow $color="#80c5cc">Working Status: Active</TrackerRow>
          <TrackerRow $color="#60d994">Active: 01:56:25</TrackerRow>
          <TrackerRow $color="#ec796d">In Active: 00:23:59</TrackerRow>
        </Tracker>
      </Body>
      <Taskbar>
        <Weather>
          <HazeIcon />
          <div>
            <div>88°F</div>
            <div className="sky">Haze</div>
          </div>
        </Weather>
        <Apps>
          <AppButton aria-label="Start">
            <WindowsLogo />
          </AppButton>
          <TaskSearch>
            <Search size={16} strokeWidth={2.5} />
            <input aria-label="Search" placeholder="Search" />
          </TaskSearch>
          {apps.map((app) => (
            <AppButton key={app.name} aria-label={app.name} $running={app.running} $active={app.active}>
              {app.icon}
            </AppButton>
          ))}
        </Apps>
        <Tray>
          <ChevronUp size={16} />
          <CloudOffIcon />
          <MonitorIcon />
          <SpeakerIcon />
          <BatteryIcon />
          <Clock>
            8:27 PM
            <br />
            7/25/2025
          </Clock>
        </Tray>
      </Taskbar>
    </Screen>
  );
}

export default App;
